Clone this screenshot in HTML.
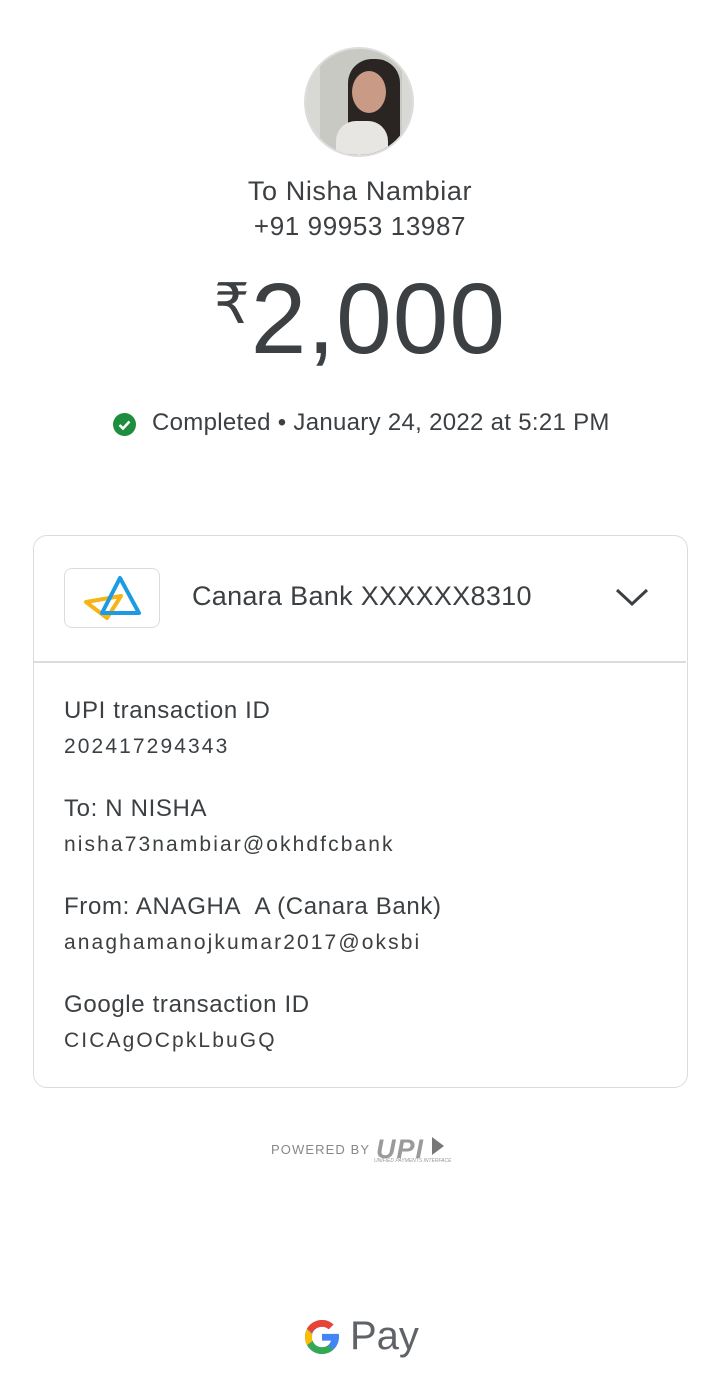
<!DOCTYPE html>
<html><head><meta charset="utf-8"><style>
body{margin:0;width:720px;height:1396px;background:#fff;font-family:"Liberation Sans",sans-serif;color:#3c4043;position:relative;overflow:hidden}
.a{position:absolute}
.c{left:0;width:720px;text-align:center}
.card{left:33px;top:535px;width:653px;height:551px;border:1.5px solid #dadce0;border-radius:14px}
.lbl{font-size:24px;color:#3c4043;left:64px;letter-spacing:.65px}
.val{font-size:21px;color:#3c4043;left:64px;letter-spacing:2.1px}
</style></head><body>
<div class="a" style="left:304px;top:47px;width:110px;height:110px;border-radius:50%;border:2px solid #ddd;box-sizing:border-box;overflow:hidden;background:#d8d8d4">
 <div class="a" style="left:14px;top:0;width:82px;height:110px;background:#c9c9c4"></div>
 <div class="a" style="left:42px;top:10px;width:52px;height:100px;background:#2a2522;border-radius:24px 24px 0 0"></div>
 <div class="a" style="left:46px;top:22px;width:34px;height:42px;background:#c99a86;border-radius:50%"></div>
 <div class="a" style="left:30px;top:72px;width:52px;height:40px;background:#e8e6e2;border-radius:20px 20px 0 0"></div>
</div>
<div class="a c" style="top:176px;font-size:27px;letter-spacing:.6px">To Nisha Nambiar</div>
<div class="a c" style="top:211px;font-size:26px;letter-spacing:.6px">+91 99953 13987</div>
<div class="a c" style="top:262px;font-size:100px;color:#3c4043;letter-spacing:1px"><span style="font-size:56px;vertical-align:30px">₹</span>2,000</div>
<div class="a" style="left:113px;top:413px;width:23px;height:23px;border-radius:50%;background:#1e8e3e"></div>
<svg class="a" style="left:113px;top:413px" width="23" height="23"><path d="M6.5 12l3.5 3.5 6.5-7" stroke="#fff" stroke-width="2.6" fill="none"/></svg>
<div class="a" style="left:152px;top:409px;font-size:24px;letter-spacing:.3px">Completed • January 24, 2022 at 5:21 PM</div>
<div class="a card"></div>
<div class="a" style="left:64px;top:568px;width:94px;height:58px;border:1.5px solid #dadce0;border-radius:8px"></div>
<svg class="a" style="left:64px;top:568px" width="96" height="60"><path d="M22 34 L57 28 L43 50 Z" stroke="#f6b417" stroke-width="4" fill="none" stroke-linejoin="round"/><path d="M56 10 L75 45 L38 45 Z" stroke="#1a9be2" stroke-width="4" fill="none" stroke-linejoin="round"/></svg>
<div class="a" style="left:192px;top:581px;font-size:27px;letter-spacing:.3px">Canara Bank XXXXXX8310</div>
<svg class="a" style="left:614px;top:586px" width="36" height="22"><path d="M3 4l15 14 15-14" stroke="#3c4043" stroke-width="3" fill="none"/></svg>
<div class="a" style="left:34px;top:661px;width:652px;height:1.5px;background:#dadce0"></div>
<div class="a lbl" style="top:697px">UPI transaction ID</div>
<div class="a val" style="top:735px">202417294343</div>
<div class="a lbl" style="top:795px">To: N NISHA</div>
<div class="a val" style="top:833px">nisha73nambiar@okhdfcbank</div>
<div class="a lbl" style="top:893px">From: ANAGHA&nbsp; A (Canara Bank)</div>
<div class="a val" style="top:931px">anaghamanojkumar2017@oksbi</div>
<div class="a lbl" style="top:991px">Google transaction ID</div>
<div class="a val" style="top:1029px">CICAgOCpkLbuGQ</div>
<div class="a" style="left:271px;top:1142px;font-size:13px;letter-spacing:1.1px;color:#888">POWERED BY</div>
<div class="a" style="left:376px;top:1134px;font-size:27px;font-style:italic;font-weight:bold;color:#9a9a9a;letter-spacing:1px">UPI</div>
<div class="a" style="left:374px;top:1158px;font-size:5px;color:#999;font-style:italic">UNIFIED PAYMENTS INTERFACE</div>
<svg class="a" style="left:430px;top:1137px" width="16" height="18"><path d="M2 0 L14 9 L2 18Z" fill="#777"/></svg>
<svg class="a" style="left:303px;top:1318px" width="38" height="38" viewBox="0 0 48 48"><path d="M43.6 20H24v8.5h11.3C34 33.7 29.6 37 24 37c-7.2 0-13-5.8-13-13s5.8-13 13-13c3.3 0 6.2 1.2 8.5 3.2l6-6C34.6 4.6 29.6 2.5 24 2.5 12.1 2.5 2.5 12.1 2.5 24S12.1 45.5 24 45.5 45.5 35.9 45.5 24c0-1.4-.1-2.700-.4-4z" fill="#4285f4"/><path d="M4.9 13.6l7 5.1C13.7 14.2 18.5 11 24 11c3.3 0 6.2 1.2 8.5 3.2l6-6C34.6 4.6 29.6 2.5 24 2.5 15.700 2.5 8.5 7.2 4.9 13.6z" fill="#ea4335"/><path d="M24 45.5c5.5 0 10.5-2 14.3-5.5l-6.6-5.4C29.6 36.2 27 37 24 37c-5.6 0-10.3-3.6-12-8.6l-7 5.4C8.4 40.6 15.6 45.5 24 45.5z" fill="#34a853"/><path d="M4.9 13.6C3.4 16.7 2.5 20.2 2.5 24s.9 7.3 2.5 10.4l7-5.4c-.4-1.3-.7-2.7-.7-4.1s.3-2.9.7-4.2z" fill="#fbbc05"/></svg>
<div class="a" style="left:350px;top:1314px;font-size:40px;color:#5f6368">Pay</div>
</body></html>
